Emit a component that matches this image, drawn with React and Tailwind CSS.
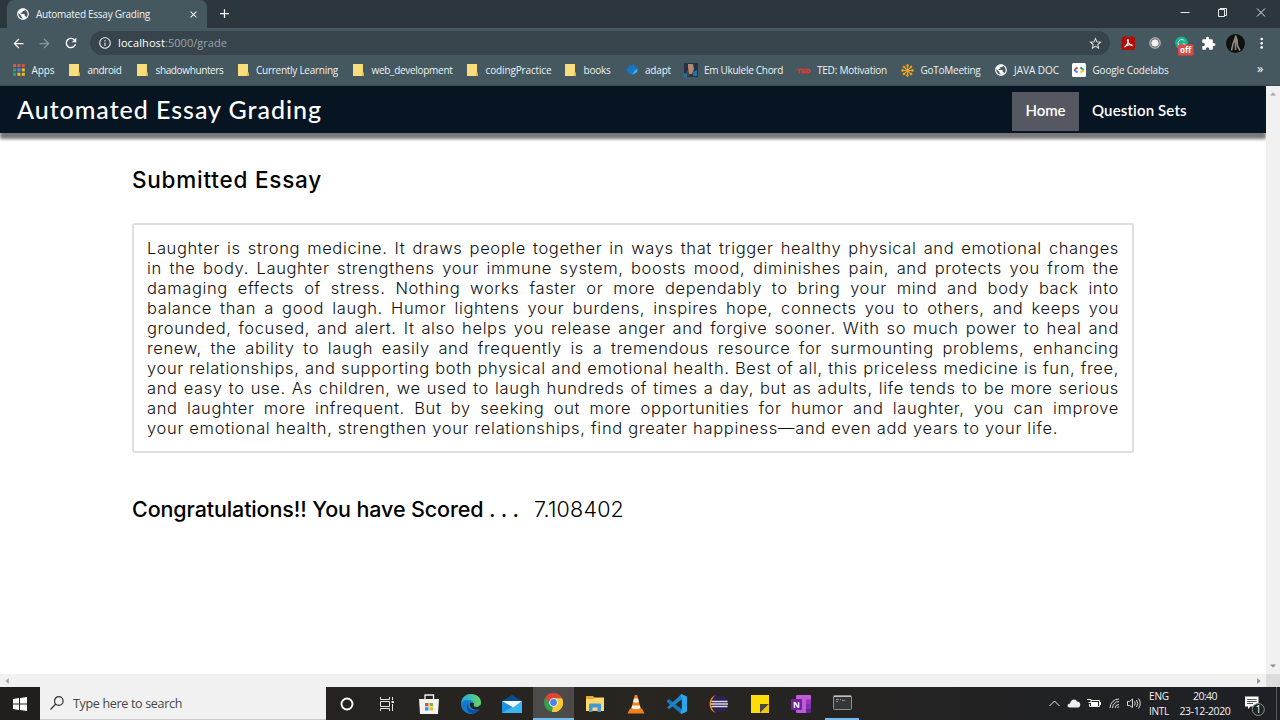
import React, { useLayoutEffect, useRef, useState } from "react";
import { MdPublic, MdStarBorder, MdExtension, MdArrowBack, MdArrowForward, MdRefresh, MdInfoOutline, MdClose, MdAdd } from "react-icons/md";

// Text on one line, letter-spaced so that it takes the given width.
function Fit({ w, className = "", children }) {
  const ref = useRef(null);
  const [spacing, setSpacing] = useState(0);
  useLayoutEffect(() => {
    const natural = ref.current.getBoundingClientRect().width;
    setSpacing((w - natural) / children.length);
  }, [w, children]);
  return (
    <span ref={ref} className={"inline-block shrink-0 whitespace-nowrap " + className} style={{ letterSpacing: spacing + "px" }}>
      {children}
    </span>
  );
}

const Folder = () => (
  <svg width="11" height="12" viewBox="0 0 11 12">
    <path d="M0 0H10V8.500H10.600V12H0Z" fill="#f9dc7c" />
    <path d="M9 8.500H10.700V12H9Z" fill="#e5bb4c" />
  </svg>
);
const AppsIcon = () => (
  <svg width="12" height="12" viewBox="0 0 12 12">
    {["#dd5246", "#dd5246", "#dd5246", "#2fa35f", "#4587e8", "#f4b926", "#2fa35f", "#f4b926", "#f4b926"].map((c, i) => (
      <rect key={i} x={(i % 3) * 4.4} y={Math.floor(i / 3) * 4.4} width="3" height="3" fill={c} />
    ))}
  </svg>
);
const Adapt = () => (
  <svg width="13" height="12" viewBox="0 0 13 12">
    <path d="M0 6 4 1.500 8 1 11.500 4 11 8 6 11 2 8.500Z" fill="#1377c4" />
    <path d="M6 11 9 6.500 11.500 4.500 11 8Z" fill="#42b8ed" />
  </svg>
);
const Ukulele = () => (
  <svg width="14" height="14" viewBox="0 0 14 14">
    <rect width="14" height="14" fill="#263243" />
    <path d="M4 1H9L10 6 8 11H5L4 7Z" fill="#b08772" />
    <path d="M5 5 4 9 6 13H2V10Z" fill="#5b3e38" />
    <path d="M9 9 13 7V13H9ZM0 10 3 11V14H0Z" fill="#2075a8" />
  </svg>
);
const Ted = () => (
  <svg width="14" height="8" viewBox="0 0 14 8">
    <text x="0" y="6.500" textLength="13" lengthAdjust="spacingAndGlyphs" fontFamily="Liberation Sans" fontSize="6" fontWeight="700" fill="#d93a30" stroke="#d93a30" strokeWidth=".5">TED</text>
  </svg>
);
const GoTo = () => (
  <svg width="13" height="13" viewBox="0 0 14 14" stroke="#f5a11c" fill="#f5a11c">
    {[0, 45, 90, 135].map((a) => (
      <g key={a} transform={`rotate(${a} 7 7)`}>
        <path d="M7 1.500V12.500" strokeWidth="1.300" />
        <circle cx="7" cy="1.600" r="1" />
        <circle cx="7" cy="12.400" r="1" />
      </g>
    ))}
  </svg>
);
const Codelabs = () => (
  <svg width="14" height="14" viewBox="0 0 14 14" fill="none" strokeWidth="1.900">
    <rect width="14" height="14" rx="1.500" fill="#fff" />
    <path d="M5.600 4.500 2.200 7" stroke="#e94235" />
    <path d="M2.200 7 5.600 9.500" stroke="#4285f4" />
    <path d="M8.400 4.500 11.800 7" stroke="#34a853" />
    <path d="M11.800 7 8.400 9.500" stroke="#fbbc05" />
    <path d="M8.400 4.500 10 5.800" stroke="#4285f4" />
  </svg>
);

const bookmarks = [
  ["Apps", AppsIcon, "w-[56px]", "w-[18.500px]", 23],
  ["android", Folder, "w-[68px]", "w-[18.500px]", 34],
  ["shadowhunters", Folder, "w-[101px]", "w-[18.500px]", 68],
  ["Currently Learning", Folder, "w-[115px]", "w-[18px]", 82],
  ["web_development", Folder, "w-[114px]", "w-[18.500px]", 81],
  ["codingPractice", Folder, "w-[98px]", "w-[18.500px]", 66],
  ["books", Folder, "w-[61px]", "w-[18.500px]", 27],
  ["adapt", Adapt, "w-[58px]", "w-[19px]", 26],
  ["Em Ukulele Chord", Ukulele, "w-[113px]", "w-[20px]", 79],
  ["TED: Motivation", Ted, "w-[104px]", "w-[20px]", 70],
  ["GoToMeeting", GoTo, "w-[93px]", "w-[19.500px]", 60],
  ["JAVA DOC", () => <MdPublic size={14} color="#fff" />, "w-[78px]", "w-[20px]", 45],
  ["Google Codelabs", Codelabs, "w-[185px]", "w-[20.500px]", 76],
];

const essay = [
  "Laughter is strong medicine. It draws people together in ways that trigger healthy physical and emotional changes",
  "in the body. Laughter strengthens your immune system, boosts mood, diminishes pain, and protects you from the",
  "damaging effects of stress. Nothing works faster or more dependably to bring your mind and body back into",
  "balance than a good laugh. Humor lightens your burdens, inspires hope, connects you to others, and keeps you",
  "grounded, focused, and alert. It also helps you release anger and forgive sooner. With so much power to heal and",
  "renew, the ability to laugh easily and frequently is a tremendous resource for surmounting problems, enhancing",
  "your relationships, and supporting both physical and emotional health. Best of all, this priceless medicine is fun, free,",
  "and easy to use. As children, we used to laugh hundreds of times a day, but as adults, life tends to be more serious",
  "and laughter more infrequent. But by seeking out more opportunities for humor and laughter, you can improve",
];

function TitleBar() {
  return (
    <div className="flex h-7 items-stretch bg-[#2c373d] pl-[7px]">
      <div className="flex w-[200px] items-center rounded-t-[7px] bg-[#455860] pl-[9px]">
        <MdPublic size={14} color="#fff" />
        <Fit w={114} className="ml-1.5 text-[10px] text-[#eef2f3]">Automated Essay Grading</Fit>
        <MdClose size={11} color="#fff" className="ml-[38px]" />
      </div>
      <MdAdd size={15} color="#fff" className="mt-1.5 ml-2.5" />
      <svg className="ml-auto" width="106" height="28" viewBox="0 0 106 28" fill="none" stroke="#e3e7e8">
        <path d="M6.500 12.500H15.500M44.500 9.500H50.500V16.500H44.500ZM46 9.500V8.500H52.500V15.500H50.500M83 8.500 91 16.500M91 8.500 83 16.500" />
      </svg>
    </div>
  );
}

function Toolbar() {
  return (
    <div className="flex h-[29px] items-center bg-[#455860] pt-px pl-[11px]">
      <MdArrowBack size={15} color="#fff" />
      <MdArrowForward size={15} color="#8b979d" className="ml-[11px]" />
      <MdRefresh size={16} color="#fff" className="ml-[11px]" />
      <div className="ml-[11px] flex h-6 w-[1020px] items-center rounded-full bg-[#37444b] pl-2">
        <MdInfoOutline size={14} color="#dfe4e6" />
        <Fit w={47} className="ml-[6px] text-[11px] text-white">localhost</Fit>
        <Fit w={62} className="text-[11px] text-[#9aa5aa]">:5000/grade</Fit>
        <MdStarBorder size={15} color="#dfe4e6" className="mr-[7px] ml-auto" />
      </div>
      <svg width="170" height="28" viewBox="1110 29 170 28">
        <rect x="1121.500" y="36.500" width="13.500" height="13.500" rx="2" fill="#ae1009" />
        <path d="M1124.500 47C1127 46 1129 41 1128 39.500C1126.500 39.500 1129 45.500 1132 45.700C1133 44 1127 44.500 1124.500 47Z" fill="none" stroke="#fff" strokeWidth="1.200" />
        <circle cx="1155" cy="43" r="6" fill="#6d7275" />
        <circle cx="1155" cy="43" r="5.200" fill="none" stroke="#c9cdcf" strokeWidth=".8" />
        <circle cx="1155" cy="43" r="3.600" fill="#f3f3f3" />
        <circle cx="1181.500" cy="43" r="6.500" fill="#18b38d" />
        <path d="M1184.500 41A3.500 3.500 0 1 0 1185 44H1182.500" fill="none" stroke="#d5f3ea" strokeWidth="1" />
        <rect x="1178" y="44.500" width="15.500" height="11" rx="1.500" fill="#dd4c44" />
        <text x="1185.700" y="53" textAnchor="middle" fontSize="8" fontWeight="700" fill="#fff" fontFamily="Open Sans">off</text>
        <circle cx="1235.500" cy="43.500" r="9.500" fill="#10110f" />
        <path d="M1235.500 35.500 1237 40 1237.500 46 1240 50.500M1235.500 37 1233 44 1231.500 50.500M1235.500 38V50" fill="none" stroke="#8f897b" strokeWidth="1.600" />
        <g fill="#fff">
          <circle cx="1261.700" cy="39" r="1.300" />
          <circle cx="1261.700" cy="43.200" r="1.300" />
          <circle cx="1261.700" cy="47.400" r="1.300" />
        </g>
        <svg x="1201" y="36" width="15" height="15" viewBox="0 0 24 24">
          <MdExtension size={24} color="#fff" />
        </svg>
      </svg>
    </div>
  );
}

function Bookmarks() {
  return (
    <div className="flex h-[29px] items-center border-b border-[#39474e] bg-[#455860] pb-[2px] pl-[13px]">
      {bookmarks.map(([label, Icon, width, slot, w]) => (
        <div key={label} className={"flex shrink-0 items-center " + width}>
          <span className={"flex shrink-0 items-center " + slot}><Icon /></span>
          <Fit w={w} className="text-[10px] text-[#eef2f3]">{label}</Fit>
        </div>
      ))}
      <span className="pb-0.5 text-[13px] text-white">»</span>
    </div>
  );
}

function Page() {
  return (
    <div className="flex h-[588px] w-[1266px] flex-col bg-white">
      <header className="flex h-[47px] shrink-0 items-center bg-[#071422] pl-[17px] font-['Lato',sans-serif] text-white shadow-[0_6px_3px_#777]">
        <Fit w={305} className="pb-px text-[25px] leading-[46px] font-medium">Automated Essay Grading</Fit>
        <nav className="ml-auto flex items-center pt-1 text-[15px] font-semibold">
          <div className="flex h-[39px] w-[67px] items-center justify-center bg-[#555861] pb-0.5"><Fit w={40}>Home</Fit></div>
          <div className="w-[187px] pb-0.5 pl-[13px]"><Fit w={95}>Question Sets</Fit></div>
        </nav>
      </header>
      <main className="ml-[132px] flex w-[1002px] flex-col font-['Inter',sans-serif] text-black">
        <h2 className="mt-[31px] h-8 text-[22.500px] leading-8 font-medium"><Fit w={190}>Submitted Essay</Fit></h2>
        <div className="mt-[27px] h-[230px] rounded-[3px] border-2 border-[#dedede] pt-[13px] pr-[13px] pl-[13px] text-[16.500px] leading-5 font-light tracking-[0.620px] text-[#111]">
          {essay.map((line) => (
            <p key={line} className="text-justify whitespace-nowrap [text-align-last:justify]">{line}</p>
          ))}
          <p><Fit w={911}>your emotional health, strengthen your relationships, find greater happiness—and even add years to your life.</Fit></p>
        </div>
        <div className="mt-[40px] flex h-8 text-[21.500px] leading-8">
          <Fit w={387} className="font-medium">Congratulations!! You have Scored . . .</Fit>
          <Fit w={90} className="ml-[15px] font-light">7.108402</Fit>
        </div>
      </main>
    </div>
  );
}

const Store = () => (
  <svg width="20" height="20" viewBox="0 0 20 20">
    <path d="M6 6V1H14.500V6" fill="none" stroke="#f3f3f3" strokeWidth="1.300" />
    <path d="M0 5H20L19 20H1Z" fill="#f2f2f2" />
    <path d="M6 9H9.500V12.300H6Z" fill="#e44f26" /><path d="M10.500 9H14V12.300H10.500Z" fill="#7cb82f" />
    <path d="M6 13.200H9.500V16.500H6Z" fill="#1a9ee2" /><path d="M10.500 13.200H14V16.500H10.500Z" fill="#f4b61a" />
  </svg>
);
const Edge = () => (
  <svg width="20" height="20" viewBox="0 0 20 20">
    <defs>
      <linearGradient id="edgeTop"><stop offset="0" stopColor="#22a7e5" /><stop offset="1" stopColor="#68d85c" /></linearGradient>
    </defs>
    <circle cx="10" cy="10" r="10" fill="#1687d5" />
    <path d="M0 9C1 3 5 0 10 0C16 0 20 4 20 8.500C20 12 16.500 14 13 12.500C12 12 13.500 10.500 12.500 8.500C10.500 5 4 4.500 0 9Z" fill="url(#edgeTop)" />
    <path d="M8 8C5 10 6 17 11 19.500C6 20.500 1 16 1 10C2 6 6 5 8 8Z" fill="#1577c8" />
    <path d="M8 9C5.500 13 10 18 18 15.500C15 20 11 20 9 19C5 16 5 11 8 9Z" fill="#0d52a0" />
    <path d="M12.500 9C13.200 10.500 12 11.500 12.800 12.300C15 13.800 18 13 19.500 10.500L20 14.500 17.500 15.500C12 17 7.500 12.500 9.200 8.800Z" fill="#25221f" />
  </svg>
);
const Mail = () => (
  <svg width="20" height="20" viewBox="0 0 20 20">
    <path d="M0 7 10 1 20 7V10H0Z" fill="#0b4b91" />
    <path d="M0 7V19H20V7L10 13Z" fill="#1b91df" />
    <path d="M20 7V19H0Z" fill="#39b5f4" />
    <path d="M0 7H20L11 13.500Z" fill="#f4f9fc" />
  </svg>
);
const Chrome = () => (
  <svg width="19" height="19" viewBox="0 0 20 20">
    <circle cx="10" cy="10" r="10" fill="#2fa350" />
    <path d="M10 10H19.900A10 10 0 0 1 8.500 19.900Z" fill="#fcc934" />
    <path d="M10 5.500H18.900A10 10 0 0 0 1.500 4.700L6 12.200 10 10Z" fill="#e24335" />
    <path d="M14 12.300 9 20A10 10 0 0 0 18.900 5.500H10Z" fill="#fcc934" />
    <circle cx="10" cy="10" r="4.600" fill="#fff" /><circle cx="10" cy="10" r="3.600" fill="#4a84e8" />
  </svg>
);
const Explorer = () => (
  <svg width="20" height="18" viewBox="0 0 20 18">
    <path d="M1 1H8L10 3H19V7H1Z" fill="#e8a92e" />
    <path d="M1 4H8L10 2.500H19V16H1Z" fill="#ffd869" />
    <path d="M4 17V9.500Q4 8.500 5 8.500H15Q16 8.500 16 9.500V17H12.500V12.500H7.500V17Z" fill="#3e9bd6" />
  </svg>
);
const Vlc = () => (
  <svg width="18" height="20" viewBox="0 0 18 20">
    <path d="M3 14.500H15L17.500 19.500H.5Z" fill="#ee8118" />
    <path d="M7.800 1H10.200L14 15.500Q9 18.500 4 15.500Z" fill="#f08216" />
    <path d="M7 4.500H11L12 8Q9 9.500 6 8ZM5.200 11.500H12.800L13.500 14Q9 16.500 4.500 14Z" fill="#f3f0eb" />
  </svg>
);
const VsCode = () => (
  <svg width="20" height="20" viewBox="0 0 20 20">
    <path d="M0 6.500 2 5 15 15.500 14.500 20 0 8Z" fill="#1779bd" />
    <path d="M0 13.500 14.500 0 15.500 5 2 15Z" fill="#2086ca" />
    <path d="M14.500 0 20 2.500V17.500L14.500 20 13.500 19 14.800 15V5L13.500 1Z" fill="#2ba6ec" />
  </svg>
);
const Eclipse = () => (
  <svg width="20" height="20" viewBox="0 0 20 20">
    <path d="M8 1A9.500 9.500 0 0 0 8 19A11 11 0 0 1 8 1Z" fill="#f28e24" />
    <circle cx="11.500" cy="10" r="8.500" fill="#2c2254" />
    <path d="M3.500 7.500H19.500M3 10H20M3.500 12.500H19.500" stroke="#d9d9ea" strokeWidth="1.300" />
  </svg>
);
const Notes = () => (
  <svg width="18" height="18" viewBox="0 0 18 18">
    <path d="M0 0H18V18H0Z" fill="#fddc08" /><path d="M9 9H18L9 18Z" fill="#4a4540" />
    <path d="M18 9V18H9Z" fill="#f2c711" />
  </svg>
);
const OneNote = () => (
  <svg width="20" height="18" viewBox="0 0 20 18">
    <rect x="5" width="15" height="18" rx="1" fill="#bd5bd9" />
    <path d="M15 4.500H20V9H15Z" fill="#9a35bb" /><path d="M15 9H20V13.500H15Z" fill="#8130ae" /><path d="M15 13.500H20V18H15Z" fill="#662394" />
    <rect y="4" width="11" height="11" rx="1" fill="#7421a0" />
    <text x="5.500" y="12.500" textAnchor="middle" fontFamily="Open Sans" fontSize="8.500" fontWeight="700" fill="#fff">N</text>
  </svg>
);
const Terminal = () => (
  <svg width="19" height="15" viewBox="0 0 19 15">
    <rect x=".5" y=".5" width="18" height="14" rx="1" fill="#333738" stroke="#8d9091" />
    <path d="M1 1.500H18" stroke="#bfc1c2" />
    <path d="M3 4.500H6M7 4.500H8M9 5.500H12M3 6.500H5" stroke="#aaa" strokeWidth=".8" />
  </svg>
);
const Cortana = () => <svg width="14" height="14" viewBox="0 0 14 14"><circle cx="7" cy="7" r="5.500" fill="none" stroke="#fff" strokeWidth="1.900" /></svg>;
const TaskView = () => (
  <svg width="14" height="14" viewBox="0 0 14 14" fill="none" stroke="#e3e3e3">
    <path d="M.5 0V2.500H9.500V0M.5 14V11.500H9.500V14M.5 4.500H9.500V9.500H.5ZM12.500 0V3M12.500 7V14" />
    <path d="M11.500 5H14" strokeWidth="2" />
  </svg>
);

const pinned = [
  [Cortana, "w-[41px]"], [TaskView, "w-[39px]"], [Store, "w-[45px]"], [Edge, "w-[39px]"],
  [Mail, "w-[43px]"],
];
const running = [
  [Explorer, "w-[41px]"], [Vlc, "w-[41px]"], [VsCode, "w-[42px]"],
  [Eclipse, "w-[40px]"], [Notes, "w-[43px]"], [OneNote, "w-[39px]"],
];

function Taskbar() {
  return (
    <div className="flex h-[33px] bg-linear-to-r from-[#211e1d] via-[#292521] to-[#1d2025]">
      <div className="flex w-10 items-center justify-center">
        <svg width="14" height="14" viewBox="0 0 14 14" fill="#fff">
          <path d="M0 2 6 1.100V6.500H0ZM7 1 14 0V6.500H7ZM0 7.500H6V12.900L0 12ZM7 7.500H14V14L7 13Z" />
        </svg>
      </div>
      <div className="flex w-[286px] items-center border-b border-[#c9c9c9] bg-[#f1f1f1] pl-2.5">
        <svg width="14" height="14" viewBox="0 0 14 14" fill="none" stroke="#333" strokeWidth="1.200"><circle cx="8.800" cy="5" r="4.300" /><path d="M5.800 8 .5 13.500" /></svg>
        <Fit w={109} className="ml-[9px] pt-0.5 text-[12.500px] text-[#454545]">Type here to search</Fit>
      </div>
      {pinned.map(([Icon, w], i) => <div key={i} className={"flex items-center justify-center " + w}><Icon /></div>)}
      <div className="flex w-[41px] items-center justify-center border-b-2 border-[#76b9ed] bg-[#4d4b4a]"><Chrome /></div>
      {running.map(([Icon, w], i) => <div key={i} className={"flex items-center justify-center " + w}><Icon /></div>)}
      <div className="ml-[5px] flex w-[34px] items-center justify-center border-b-2 border-[#76b9ed]"><Terminal /></div>
      <svg className="ml-auto" width="99" height="33" viewBox="0 0 99 33" fill="none" stroke="#eee">
        <path d="M4.500 19 9.500 14 14.500 19" />
        <path d="M25 20.500C21.500 20.500 22 16.500 25 16.500C26 11.500 31 11.500 32 14.500C36 14 36.500 20.500 33 20.500Z" fill="#eee" stroke="none" />
        <path d="M46 13.500H54.500V19.500H44.500V17M42 12.500H46V15.500H43.500" />
        <path d="M46 15H53V19H46ZM55 15H56V18H55Z" fill="#fff" stroke="none" />
        <path d="M65 21A9 9 0 0 1 74 12M67.500 21A6.500 6.500 0 0 1 74 14.500M70 21A4 4 0 0 1 74 17.500M72.500 21A1.500 1.500 0 0 1 74 19.800" strokeWidth=".9" />
        <path d="M82.500 14.500H84.500L87.500 12V20.500L84.500 18.500H82.500ZM89.500 14.500Q91 16.500 89.500 18.500M91.500 13Q94 16.500 91.500 20M93.500 11.500Q97 16.500 93.500 21.500" strokeWidth=".9" />
      </svg>
      <div className="ml-[4px] flex w-[31px] flex-col items-start pt-[2px] pl-px text-[10px] leading-[15px] text-[#f3f3f3]"><Fit w={20}>ENG</Fit><Fit w={20}>INTL</Fit></div>
      <div className="flex w-[52px] flex-col items-center pt-[2px] text-[10.500px] leading-[15px] text-[#f3f3f3]"><Fit w={24}>20:40</Fit><Fit w={51}>23-12-2020</Fit></div>
      <svg width="49" height="33" viewBox="0 0 49 33">
        <path d="M14 9.500H27.500V19.500H19.500L17 22V19.500H14Z" fill="#fff" />
        <path d="M16 12.500H25.500M16 14.500H25.500M16 16.500H22" stroke="#292a2d" strokeWidth=".8" />
        <circle cx="27.300" cy="22.500" r="6" fill="#222326" stroke="#8e8e8e" />
        <text x="27.300" y="26.200" textAnchor="middle" fontFamily="Open Sans" fontSize="10" fill="#fff">1</text>
        <path d="M45.500 0V33" stroke="#56585a" />
      </svg>
    </div>
  );
}

export default function App() {
  return (
    <div className="h-[720px] w-[1280px] overflow-hidden bg-white font-['Open_Sans',sans-serif]">
      <TitleBar />
      <Toolbar />
      <Bookmarks />
      <div className="flex h-[588px]">
        <Page />
        <div className="relative flex w-3.5 flex-col items-center justify-between bg-[#f1f1f1] py-1.5">
          <svg width="6" height="4" viewBox="0 0 6 4"><path d="M0 3.500 3 .5 6 3.500Z" fill="#a3a3a3" /></svg>
          <svg width="6" height="4" viewBox="0 0 6 4"><path d="M0 .5 3 3.500 6 .5Z" fill="#8c8c8c" /></svg>
        </div>
      </div>
      <div className="flex h-[13px] items-center bg-[#f1f1f1]">
        <div className="flex w-[1266px] items-center justify-between px-[5px]">
          <svg width="4" height="6" viewBox="0 0 4 6"><path d="M3.800 0 .5 3 3.800 6Z" fill="#a3a3a3" /></svg>
          <svg width="4" height="6" viewBox="0 0 4 6"><path d="M.2 0 3.500 3 .2 6Z" fill="#8c8c8c" /></svg>
        </div>
        <div className="h-full w-3.5 bg-[#dcdcdc]" />
      </div>
      <Taskbar />
    </div>
  );
}
